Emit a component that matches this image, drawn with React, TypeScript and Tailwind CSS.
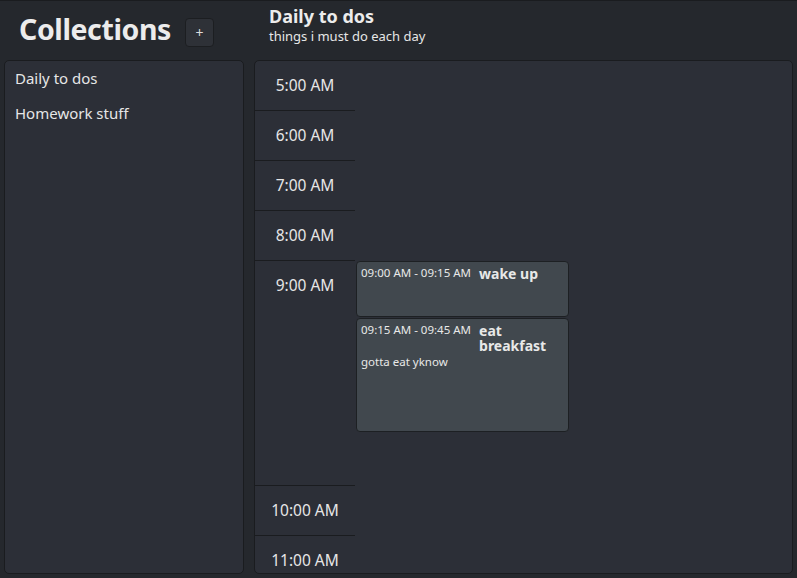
import React from "react";

type Task = { id: number; start: string; end: string; title: string; note?: string; height: number };

const hours = ["5:00 AM", "6:00 AM", "7:00 AM", "8:00 AM", "9:00 AM", "10:00 AM", "11:00 AM"];

const tasks: Record<string, Task[]> = {
  "9:00 AM": [
    { id: 1, start: "09:00 AM", end: "09:15 AM", title: "wake up", height: 56 },
    { id: 2, start: "09:15 AM", end: "09:45 AM", title: "eat breakfast", note: "gotta eat yknow", height: 114 },
  ],
};

function TaskCard({ task }: { task: Task }) {
  return (
    <div
      className="w-[213px] rounded-[4px] border border-[#1d2023] bg-[#41484e] px-[4px] pt-[3px] text-[#e8e8e8]"
      style={{ height: task.height }}
    >
      <div className="flex items-start gap-[8px]">
        <span className="text-[11.5px] leading-[16px] whitespace-nowrap">
          {task.start} - {task.end}
        </span>
        <span className="w-[80px] text-[14px] font-bold leading-[15px] pt-[1px]">{task.title}</span>
      </div>
      {task.note && <p className="mt-[1px] text-[11.5px] leading-[16px]">{task.note}</p>}
    </div>
  );
}

export default function App() {
  return (
    <div
      className="h-[578px] w-[797px] overflow-hidden border-t border-[#1a1c1f] bg-[#25282d] text-[#e6e6e6]"
      style={{ fontFamily: '"Noto Sans", "Open Sans", sans-serif' }}
    >
      <div className="flex h-[59px]">
        <div className="flex w-[254px] items-center pl-[19px]">
          <h1 className="-mt-[3px] text-[28.5px] font-bold leading-none tracking-[-0.4px] text-[#ececec]">
            Collections
          </h1>
          <button className="ml-[14px] mt-[4px] flex h-[29px] w-[29px] items-center justify-center rounded-[4px] border border-[#1c1e21] bg-[#2e3137] text-[14px] text-[#dcdcdc]">
            +
          </button>
        </div>
        <div className="pl-[15px] pt-[3px]">
          <h2 className="text-[18px] font-bold leading-[24px] text-[#ececec]">Daily to dos</h2>
          <p className="text-[13px] leading-[17px]">things i must do each day</p>
        </div>
      </div>

      <div className="flex h-[518px] gap-[10px] px-[4px] pb-[4px]">
        <div className="w-[240px] rounded-[5px] border border-[#1a1c1f] bg-[#2c2f37] pt-[6px]">
          {["Daily to dos", "Homework stuff"].map((c) => (
            <div key={c} className="h-[35px] pl-[10px] text-[15px] leading-[22px]">
              {c}
            </div>
          ))}
        </div>

        <div className="flex-1 overflow-hidden rounded-[5px] border border-[#1a1c1f] bg-[#2c2f37]">
          {hours.map((h) => {
            const list = tasks[h];
            return (
              <div key={h} className="flex">
                <div
                  className="w-[100px] border-b border-[#1a1c1f]"
                  style={{ height: list ? 225 : 50 }}
                >
                  <div className="flex h-[49px] items-center justify-center text-[15.5px]">{h}</div>
                </div>
                <div className="flex flex-col gap-[1px] pl-[1px]">
                  {list?.map((t) => <TaskCard key={t.id} task={t} />)}
                </div>
              </div>
            );
          })}
        </div>
      </div>
    </div>
  );
}
